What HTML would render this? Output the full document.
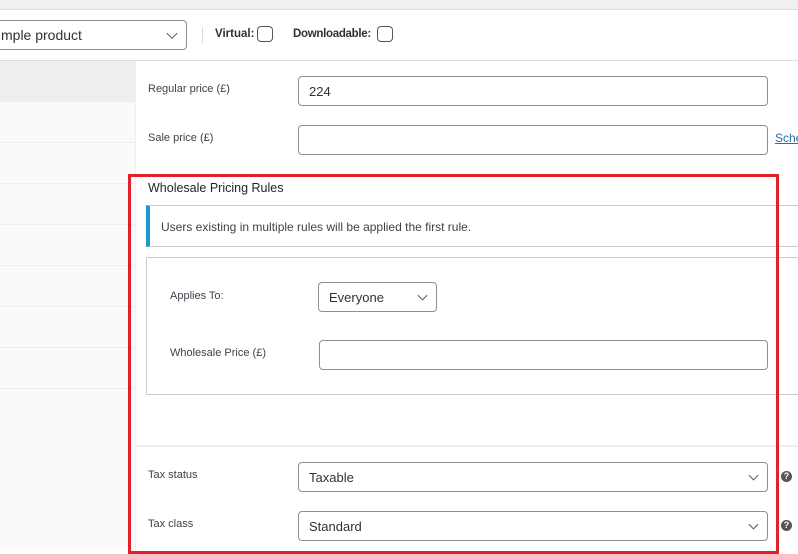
<!DOCTYPE html>
<html><head><meta charset="utf-8"><style>
*{box-sizing:border-box;margin:0;padding:0}
body{width:798px;height:551px;overflow:hidden;background:#fff;font-family:"Liberation Sans",sans-serif;color:#3c434a;position:relative}
.a{position:absolute}
.lbl{font-size:11px;color:#3c434a}
.inp{position:absolute;border:1px solid #8c8f94;border-radius:4px;background:#fff;font-size:13px;color:#2c3338;padding-left:10px;display:flex;align-items:center}
.chev{position:absolute;right:10px;top:50%;width:8px;height:8px;border-right:1.5px solid #50575e;border-bottom:1.5px solid #50575e;transform:translateY(-70%) rotate(45deg)}
.hr{position:absolute;left:0;width:135px;height:1px;background:#eee}
.q{position:absolute;width:11px;height:11px;border-radius:50%;background:#555;color:#fff;font-size:9px;font-weight:bold;text-align:center;line-height:11px}
</style></head><body>
<div class="a" style="left:0;top:0;width:798px;height:10px;background:#f0f0f1;border-bottom:1px solid #dcdcde"></div>
<div class="a" style="left:0;top:60px;width:798px;height:1px;background:#dcdcde"></div>
<div class="inp" style="left:-10px;top:20px;width:197px;height:30px;font-size:14px">mple product<span class="chev"></span></div>
<div class="a" style="left:202px;top:27px;width:1px;height:16px;background:#dcdcde"></div>
<div class="a" style="left:215px;top:28px;font-size:11.5px;color:#2c3338;font-weight:600">Virtual:</div>
<div class="a" style="left:257px;top:26px;width:16px;height:16px;border:1px solid #50575e;border-radius:4px"></div>
<div class="a" style="left:293px;top:28px;font-size:11.5px;color:#2c3338;font-weight:600;letter-spacing:-0.3px">Downloadable:</div>
<div class="a" style="left:377px;top:26px;width:16px;height:16px;border:1px solid #50575e;border-radius:4px"></div>

<div class="a" style="left:0;top:61px;width:136px;height:490px;background:#fafafa;border-right:1px solid #eee"></div>
<div class="a" style="left:0;top:61px;width:135px;height:41px;background:#eee"></div>
<div class="hr" style="top:142px"></div><div class="hr" style="top:183px"></div><div class="hr" style="top:224px"></div><div class="hr" style="top:265px"></div><div class="hr" style="top:306px"></div><div class="hr" style="top:347px"></div><div class="hr" style="top:388px"></div>

<div class="a lbl" style="left:148px;top:83px">Regular price (£)</div>
<div class="inp" style="left:298px;top:76px;width:470px;height:30px">224</div>
<div class="a lbl" style="left:148px;top:132px">Sale price (£)</div>
<div class="inp" style="left:298px;top:125px;width:470px;height:30px"></div>
<div class="a" style="left:775px;top:131px;font-size:12px;color:#2271b1;text-decoration:underline">Sche</div>

<div class="a" style="left:148px;top:181px;font-size:12.5px;color:#1d2327">Wholesale Pricing Rules</div>
<div class="a" style="left:146px;top:205px;width:652px;height:42px;border-top:1px solid #ccc;border-bottom:1px solid #ccc;border-left:4px solid #1b9bcc;background:#fff"></div>
<div class="a" style="left:161px;top:220px;font-size:12px;color:#3c434a">Users existing in multiple rules will be applied the first rule.</div>
<div class="a" style="left:146px;top:257px;width:660px;height:138px;border:1px solid #ccc"></div>
<div class="a lbl" style="left:170px;top:290px">Applies To:</div>
<div class="inp" style="left:318px;top:282px;width:119px;height:30px">Everyone<span class="chev" style="width:7px;height:7px"></span></div>
<div class="a lbl" style="left:170px;top:347px">Wholesale Price (£)</div>
<div class="inp" style="left:319px;top:340px;width:449px;height:30px"></div>
<div class="a" style="left:135px;top:445px;width:663px;height:2px;background:#eee"></div>

<div class="a lbl" style="left:148px;top:469px">Tax status</div>
<div class="inp" style="left:298px;top:462px;width:470px;height:30px">Taxable<span class="chev" style="width:7px;height:7px"></span></div>
<div class="q" style="left:781px;top:471px">?</div>
<div class="a lbl" style="left:148px;top:518px">Tax class</div>
<div class="inp" style="left:298px;top:511px;width:470px;height:30px">Standard<span class="chev" style="width:7px;height:7px"></span></div>
<div class="q" style="left:781px;top:520px">?</div>

<div class="a" style="left:128px;top:174px;width:651px;height:380px;border:3px solid #e0212a"></div>
</body></html>
